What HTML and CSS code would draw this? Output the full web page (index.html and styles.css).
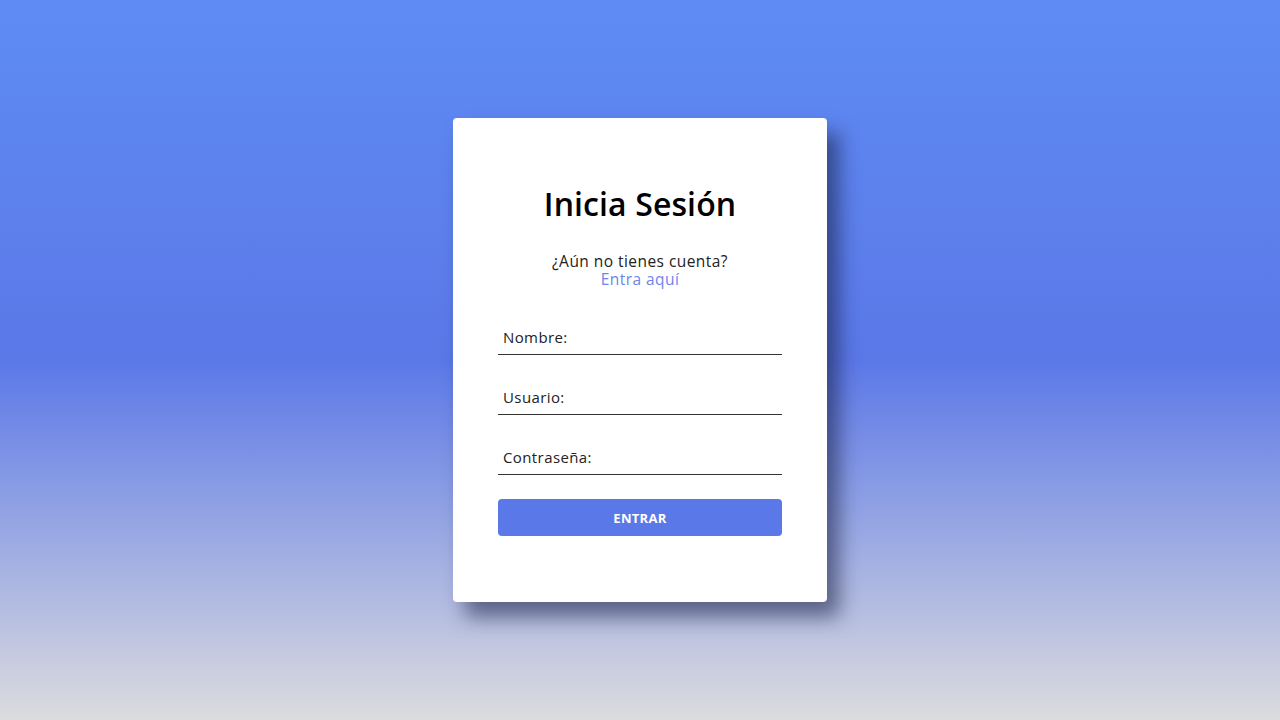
FILE: index.html
```html
<!DOCTYPE html>
<html lang="es">
<head>
<meta charset="utf-8">
<title>Inicia Sesión</title>
<link rel="stylesheet" href="styles.css">
</head>
<body>
<main class="card">
  <h1 class="title">Inicia Sesión</h1>
  <p class="subtitle">¿Aún no tienes cuenta?<br><a class="link" href="#">Entra aquí</a></p>
  <form class="form">
    <input class="field" type="text" placeholder="Nombre:">
    <input class="field" type="text" placeholder="Usuario:">
    <input class="field" type="password" placeholder="Contraseña:">
    <button class="btn" type="button">ENTRAR</button>
  </form>
</main>
</body>
</html>
```
FILE: styles.css
```css
* { box-sizing: border-box; }
html, body { margin: 0; height: 100%; }
body {
  font-family: "Open Sans", "DejaVu Sans", sans-serif;
  background: linear-gradient(to bottom, #5e8cf4 0%, #5b78e8 50%, #dcdcde 100%);
  display: flex;
  align-items: center;
  justify-content: center;
  height: 720px;
}
.card {
  width: 374px;
  height: 484px;
  background: #fff;
  border-radius: 4px;
  padding: 66px 45px 66px;
  box-shadow: 12px 15px 20px rgba(20, 25, 60, 0.55);
  display: flex;
  flex-direction: column;
}
.title {
  margin: 0;
  font-size: 32px;
  line-height: 40px;
  font-weight: 600;
  letter-spacing: 0.1px;
  text-align: center;
  color: #000;
}
.subtitle {
  margin: 28px 0 0;
  font-size: 15.5px;
  line-height: 18px;
  letter-spacing: 0.45px;
  text-align: center;
  color: #222;
}
.link { color: #6b85ec; text-decoration: none; }
.form {
  display: flex;
  flex-direction: column;
  gap: 24px;
  margin-top: 31px;
}
.field {
  height: 36px;
  border: none;
  border-bottom: 1.5px solid #333;
  padding: 0 5px;
  font-family: inherit;
  font-size: 15px;
  letter-spacing: 0.4px;
  outline: none;
  background: transparent;
}
.field::placeholder { color: #222; }
.btn {
  height: 37px;
  border: none;
  border-radius: 4px;
  background: #5b78e8;
  color: #fff;
  font-family: inherit;
  font-weight: 700;
  font-size: 13px;
  letter-spacing: 0.3px;
}
```
